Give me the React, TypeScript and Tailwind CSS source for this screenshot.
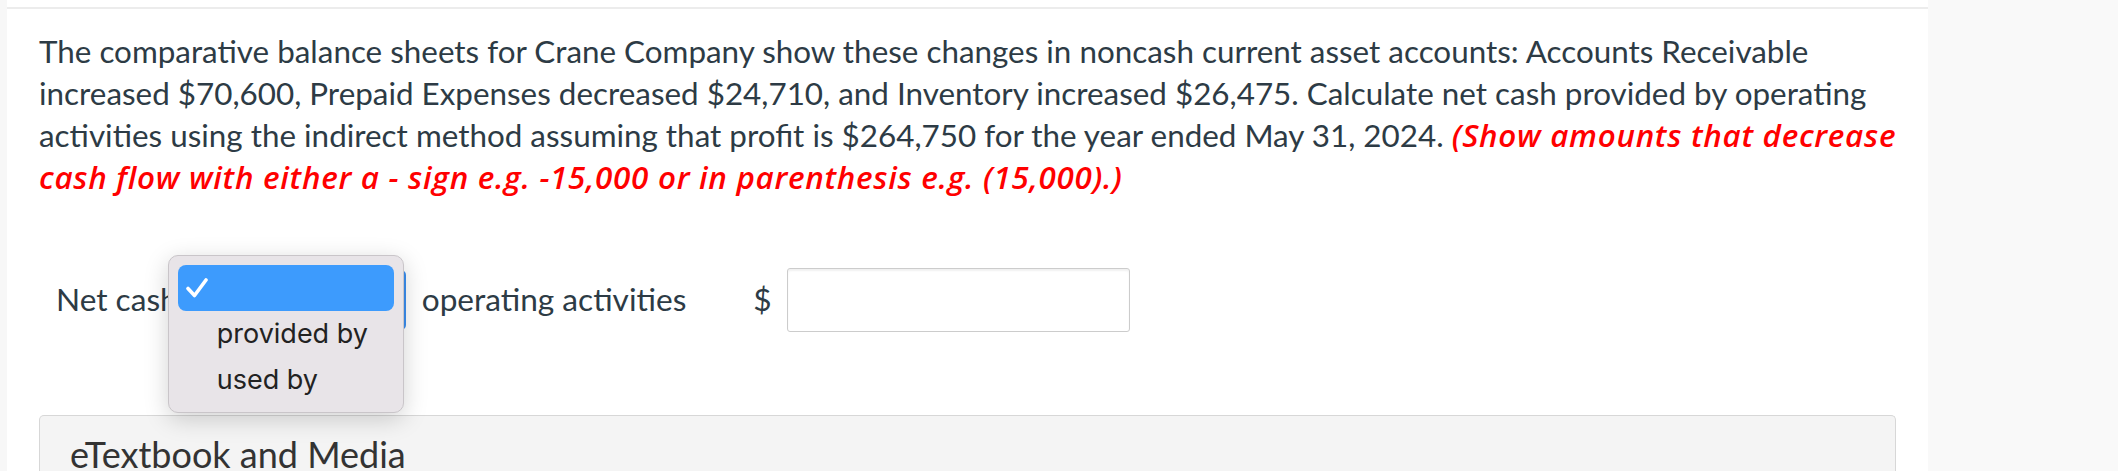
const options = ['provided by', 'used by']

export default function App() {
  return (
    <div className="flex w-[2118px] h-[471px] overflow-hidden bg-[#f9f9f9] font-['Lato',sans-serif]">
      <div className="w-[7px] shrink-0 bg-[#f7f7f7]" />
      <div className="w-[1921px] shrink-0 bg-white pt-[7px]">
        <div className="h-[2px] bg-[#ececec]" />
        <div className="px-[32px] pt-[21px]">
          <p className="mr-[-10px] text-[31.4px] leading-[42px] text-[#2d3b45]">
            The comparative balance sheets for Crane Company show these changes in noncash current asset accounts: Accounts
            Receivable increased $70,600, Prepaid Expenses decreased $24,710, and Inventory increased $26,475. Calculate net
            cash provided by operating activities using the indirect method assuming that profit is $264,750 for the year
            ended May 31, 2024.{' '}
            <span className="font-['Open_Sans',sans-serif] font-semibold italic tracking-[0.7px] text-[#ff0000]">
              (Show amounts that decrease cash flow with either a - sign e.g. -15,000 or in parenthesis e.g. (15,000).)
            </span>
          </p>

          <div className="mt-[70px] flex h-[64px] items-center pl-[17px] text-[31.6px] text-[#2d3b45]">
            <span>Net cash</span>
            <div className="relative ml-[6px] h-[60px] w-[222px]">
              <div className="h-full w-full rounded-[5px] border-2 border-[#3b8ff0] bg-white" />
              <div className="absolute left-[-16px] top-[-15px] z-10 w-[236px] rounded-[10px] border border-[#c9c5c9] bg-[#e8e4e8] p-[9px] font-['Inter',sans-serif] text-[27px] whitespace-nowrap text-[#222] shadow-[0_6px_24px_rgba(0,0,0,0.18)]">
                <div className="flex h-[46px] items-center rounded-[8px] bg-[#3d9bfd] pl-[8px]">
                  <svg width="22" height="20" viewBox="0 0 22 20" fill="none">
                    <path d="M2 10.5 L8.5 17.5 L20 2" stroke="white" strokeWidth="3.6" strokeLinecap="round" strokeLinejoin="round" />
                  </svg>
                </div>
                {options.map((o) => (
                  <div key={o} className="flex h-[46px] items-center pl-[39px]">
                    {o}
                  </div>
                ))}
              </div>
            </div>
            <span className="ml-[16px]">operating activities</span>
            <span className="ml-[67px]">$</span>
            <div className="ml-[15px] h-[64px] w-[343px] rounded-[3px] border-[1.5px] border-[#cccccc] bg-white shadow-[inset_0_2px_2px_rgba(0,0,0,0.06)]" />
          </div>

          <div className="mt-[83px] rounded-t-[5px] border-[1.5px] border-b-0 border-[#d7d7d7] bg-[#f4f4f4] pl-[30px] pt-[11px]">
            <span className="text-[36px] leading-[54px] text-[#333]">eTextbook and Media</span>
          </div>
        </div>
      </div>
    </div>
  )
}
